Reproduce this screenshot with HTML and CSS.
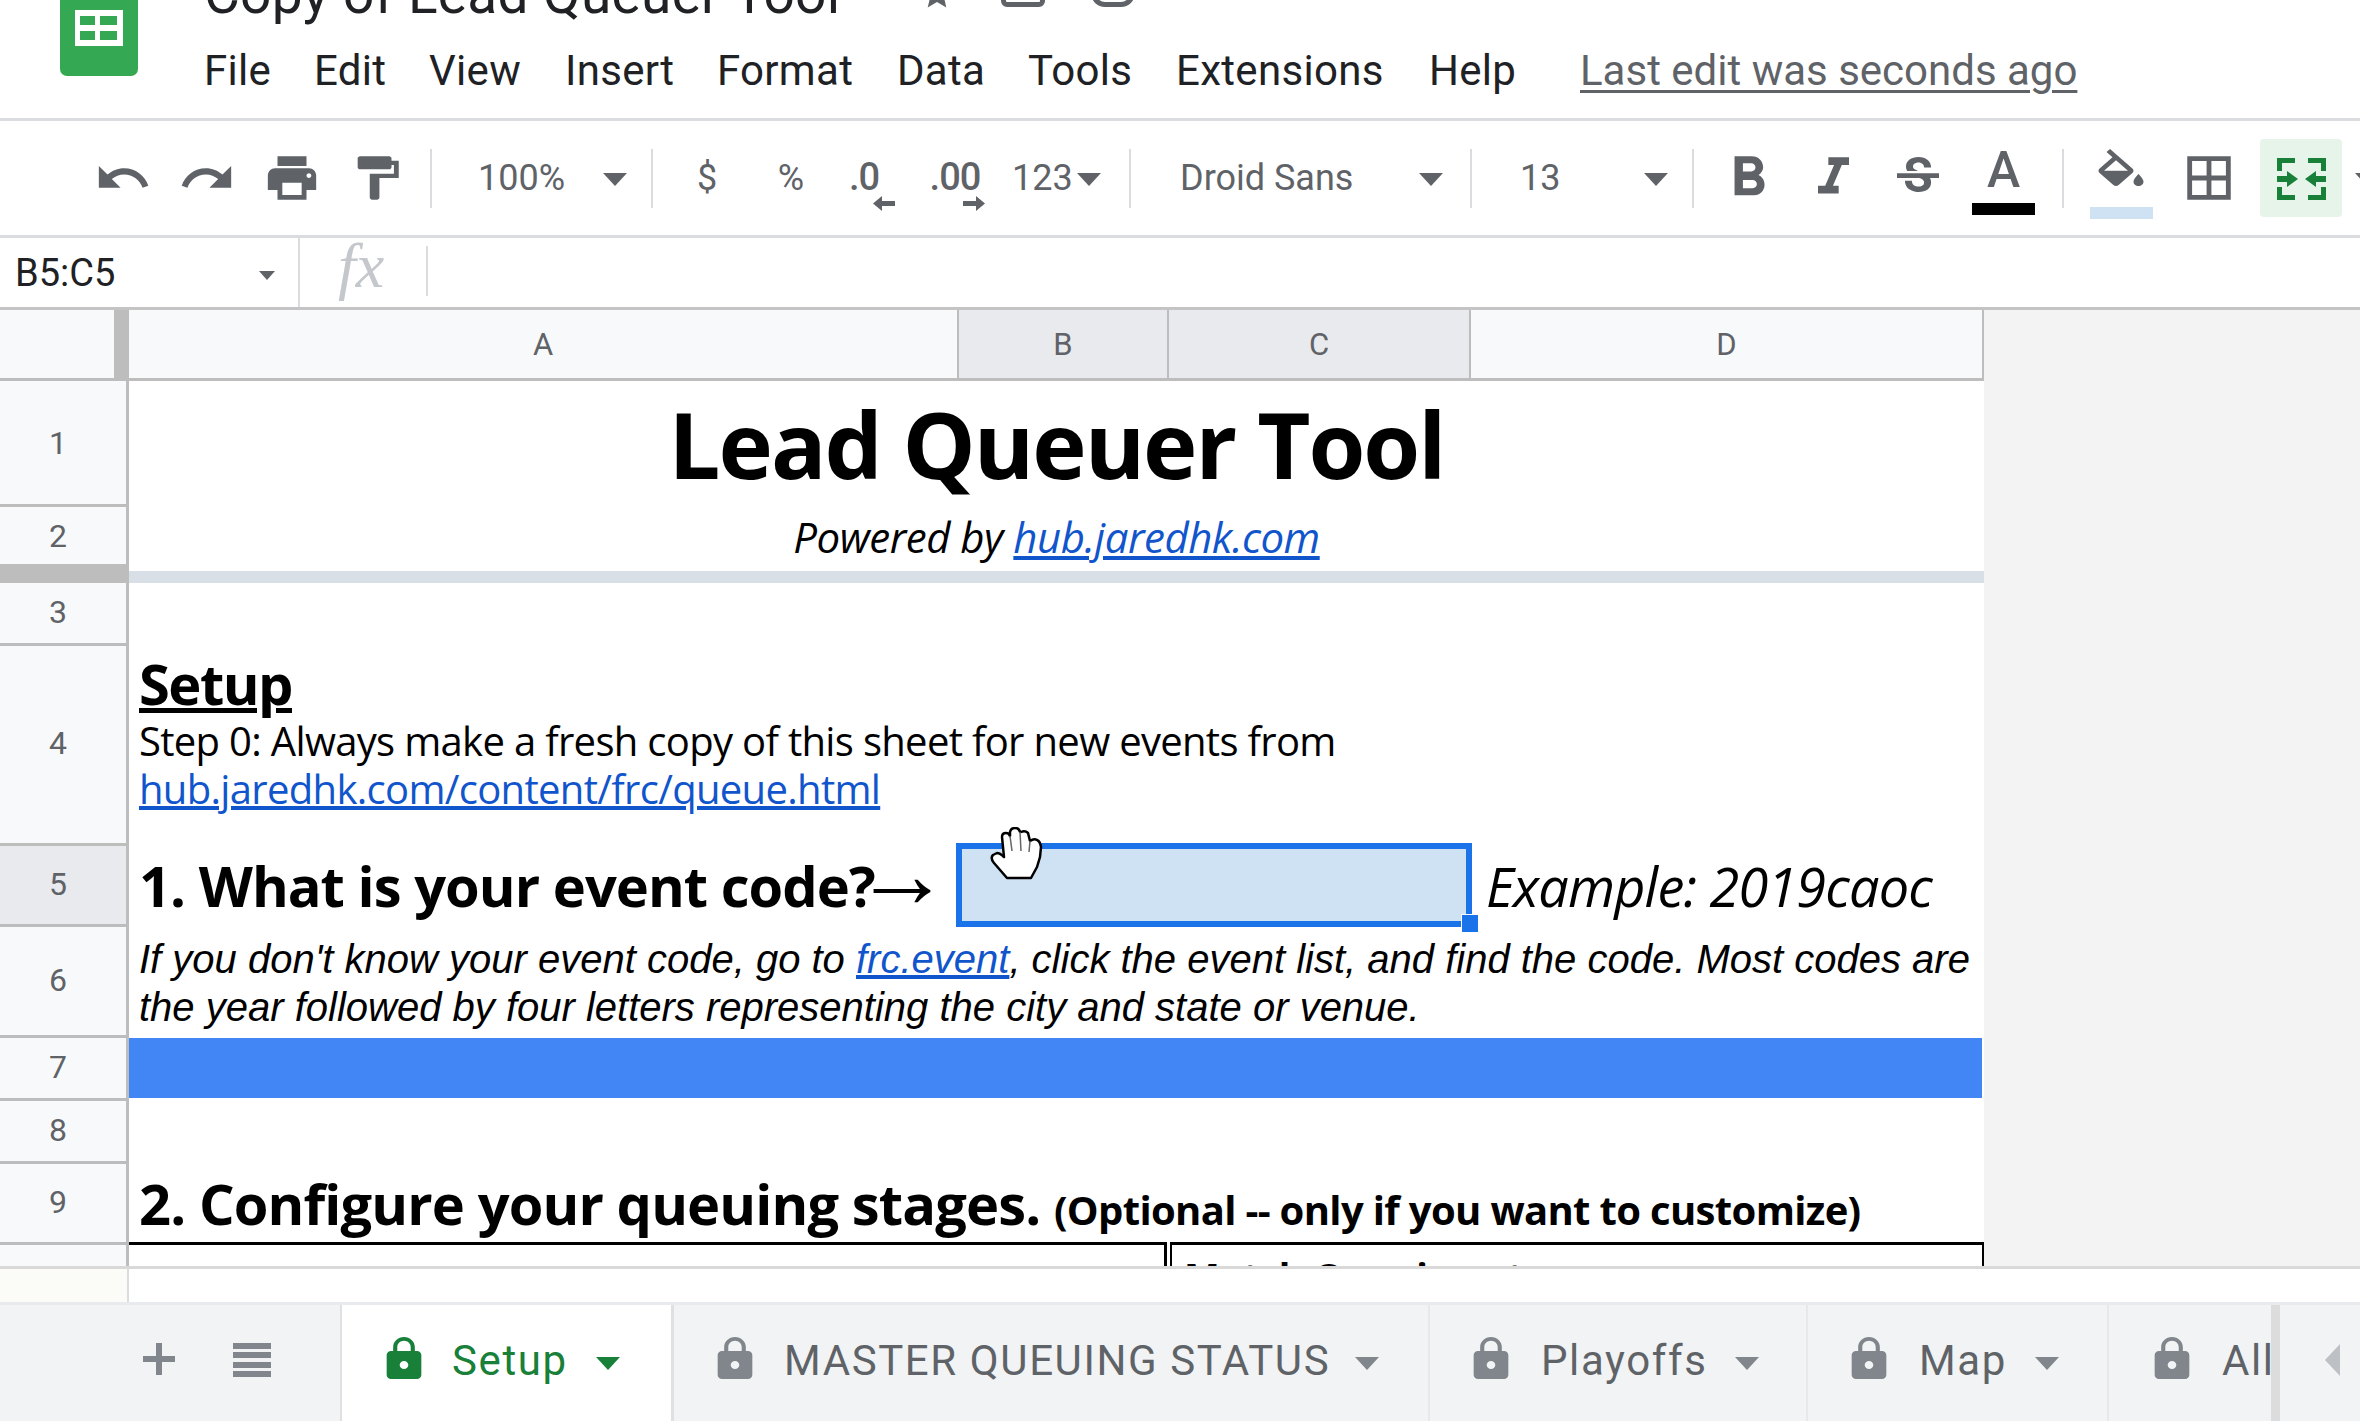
FILE: index.html
```html
<!DOCTYPE html>
<html lang="en">
<head>
<meta charset="utf-8">
<title>Copy of Lead Queuer Tool</title>
<link rel="stylesheet" href="styles.css">
</head>
<body>
<header class="appbar">
  <div class="logo">
    <svg width="48" height="36" viewBox="0 0 48 36"><path fill="#fff" d="M0 0h48v36H0z"/><path fill="#34a853" d="M5 6h15v9H5zM25 6h17v9H25zM5 21h15v9H5zM25 21h17v9H25z"/></svg>
  </div>
  <div class="appmain">
    <div class="titlerow">
      <span class="doctitle">Copy of Lead Queuer Tool</span>
      <svg class="star" width="36" height="36" viewBox="0 0 24 24"><path fill="#5f6368" d="M12 17.3l6.2 3.7-1.6-7L22 9.2l-7.2-.6L12 2 9.2 8.6 2 9.2 7.5 14l-1.7 7z"/></svg>
      <span class="ghost one"></span>
      <span class="ghost two"></span>
    </div>
    <nav class="menubar">
      <span class="m-file">File</span><span class="m-edit">Edit</span><span class="m-view">View</span><span class="m-insert">Insert</span><span class="m-format">Format</span><span class="m-data">Data</span><span class="m-tools">Tools</span><span class="m-ext">Extensions</span><span class="m-help">Help</span>
      <a class="lastedit">Last edit was seconds ago</a>
    </nav>
  </div>
</header>

<div class="toolbar">
  <div class="cell"><svg class="ic" width="58" height="58" viewBox="0 0 24 24"><path d="M12.5 8c-2.65 0-5.05.99-6.9 2.6L2 7v9h9l-3.62-3.62c1.39-1.16 3.16-1.88 5.12-1.88 3.54 0 6.55 2.31 7.6 5.5l2.37-.78C21.08 11.03 17.15 8 12.5 8z"/></svg></div>
  <div class="cell"><svg class="ic" width="58" height="58" viewBox="0 0 24 24"><path d="M18.4 10.6C16.55 8.99 14.15 8 11.5 8c-4.65 0-8.58 3.03-9.96 7.22L3.9 16c1.05-3.19 4.05-5.5 7.6-5.5 1.95 0 3.73.72 5.12 1.88L13 16h9V7l-3.6 3.6z"/></svg></div>
  <div class="cell"><svg class="ic" width="58" height="58" viewBox="0 0 24 24"><path d="M19 8H5c-1.66 0-3 1.34-3 3v6h4v4h12v-4h4v-6c0-1.66-1.34-3-3-3zm-3 11H8v-5h8v5zm3-7c-.55 0-1-.45-1-1s.45-1 1-1 1 .45 1 1-.45 1-1 1zm-1-9H6v4h12V3z"/></svg></div>
  <div class="cell"><svg class="ic" width="58" height="52" viewBox="0 0 24 24" preserveAspectRatio="none"><path d="M18 4V3c0-.55-.45-1-1-1H5c-.55 0-1 .45-1 1v4c0 .55.45 1 1 1h12c.55 0 1-.45 1-1V6h1v4H9v11c0 .55.45 1 1 1h2c.55 0 1-.45 1-1v-9h8V4h-3z"/></svg></div>
  <div class="cell"><i class="sep"></i></div>
  <div class="cell drop zoomc"><span>100%</span><b class="tri"></b></div>
  <div class="cell"><i class="sep"></i></div>
  <div class="cell txt">$</div>
  <div class="cell txt">%</div>
  <div class="cell dec dec1"><span>.0</span><svg class="ic darrow left" width="22" height="15" viewBox="0 0 22 15"><path d="M0 7.500L9 0v5h13v5H9v5z"/></svg></div>
  <div class="cell dec dec2"><span>.00</span><svg class="ic darrow right" width="22" height="15" viewBox="0 0 22 15"><path d="M22 7.500L13 0v5H0v5h13v5z"/></svg></div>
  <div class="cell drop numc"><span>123</span><b class="tri"></b></div>
  <div class="cell"><i class="sep"></i></div>
  <div class="cell drop fontc"><span>Droid Sans</span><b class="tri"></b></div>
  <div class="cell"><i class="sep"></i></div>
  <div class="cell drop sizec"><span>13</span><b class="tri"></b></div>
  <div class="cell"><i class="sep"></i></div>
  <div class="cell"><svg class="ic" width="67" height="67" viewBox="0 0 24 24"><path d="M15.6 10.790c.97-.67 1.65-1.770 1.650-2.790 0-2.260-1.750-4-4-4H7v14h7.040c2.090 0 3.710-1.700 3.710-3.790 0-1.520-.86-2.820-2.150-3.420zM10 6.500h3c.83 0 1.500.67 1.500 1.500s-.67 1.500-1.500 1.500h-3v-3zm3.500 9H10v-3h3.500c.83 0 1.500.67 1.500 1.500s-.67 1.500-1.500 1.500z"/></svg></div>
  <div class="cell"><svg class="ic" width="67" height="62" viewBox="0 0 24 24"><path d="M10 4v3h2.210l-3.420 8H6v3h8v-3h-2.210l3.420-8H18V4z"/></svg></div>
  <div class="cell"><svg class="ic" width="56" height="56" viewBox="0 0 24 24"><path d="M7.240 8.750c-.26-.48-.39-1.030-.39-1.670 0-.61.13-1.160.4-1.670.26-.5.63-.93 1.110-1.290.48-.35 1.050-.63 1.700-.83.66-.19 1.390-.29 2.180-.29.81 0 1.540.11 2.210.34.66.22 1.230.54 1.690.94.47.4.83.88 1.080 1.430.25.55.38 1.150.38 1.810h-3.010c0-.31-.05-.59-.15-.85-.09-.27-.24-.49-.44-.68-.2-.19-.45-.33-.75-.44-.3-.1-.66-.16-1.060-.16-.39 0-.74.04-1.030.13-.29.09-.53.21-.72.36-.19.16-.34.34-.44.55-.1.21-.15.43-.15.66 0 .48.25.88.74 1.210.38.25.77.48 1.410.7H7.390c-.05-.08-.11-.17-.15-.25zM21 12v-2H3v2h9.620c.18.07.4.14.55.2.37.17.66.34.87.51.21.17.35.36.43.57.07.2.11.43.11.69 0 .23-.05.45-.14.66-.09.2-.23.38-.42.53-.19.15-.42.26-.71.35-.29.08-.63.13-1.010.13-.43 0-.83-.04-1.180-.13s-.66-.23-.91-.42c-.25-.19-.45-.44-.59-.75-.14-.31-.25-.76-.25-1.210H6.400c0 .55.08 1.130.24 1.580.16.45.37.85.65 1.210.28.35.6.66.98.92.37.26.78.48 1.220.65.44.17.9.3 1.380.39.48.08.96.13 1.440.13.8 0 1.530-.09 2.180-.28s1.210-.45 1.670-.79c.46-.34.82-.77 1.070-1.270s.38-1.070.38-1.710c0-.6-.1-1.140-.31-1.610-.05-.11-.11-.23-.17-.33H21z"/></svg></div>
  <div class="cell colorc"><span class="letter">A</span><i class="swatch black"></i></div>
  <div class="cell"><i class="sep"></i></div>
  <div class="cell colorc"><svg class="ic fillic" width="60" height="37" viewBox="0 0 24 17" preserveAspectRatio="none"><path d="M16.560 8.940L7.620 0 6.210 1.410l2.380 2.380-5.150 5.150c-.59.59-.59 1.540 0 2.120l5.500 5.500c.29.29.68.44 1.060.44s.77-.15 1.060-.44l5.500-5.500c.59-.58.59-1.530 0-2.120zM5.210 10L10 5.210 14.790 10H5.210zM19 11.500s-2 2.170-2 3.500c0 1.100.9 2 2 2s2-.9 2-2c0-1.330-2-3.500-2-3.500z"/></svg><i class="swatch pale"></i></div>
  <div class="cell"><svg class="ic" width="58" height="58" viewBox="0 0 24 24"><path d="M3 3v18h18V3H3zm8 16H5v-6h6v6zm0-8H5V5h6v6zm8 8h-6v-6h6v6zm0-8h-6V5h6v6z"/></svg></div>
  <div class="cell"><div class="mergebtn"><svg width="49" height="42" viewBox="0 0 49 42"><g fill="none" stroke="#188038" stroke-width="5"><path d="M2.500 13V2.500H18M31 2.500h15.500V13M2.500 29v10.500H18M31 39.500h15.500V29"/></g><path fill="#188038" d="M0 18h10v-5l11 8-11 8v-5H0zM49 18H39v-5l-11 8 11 8v-5h10z"/></svg></div></div>
  <div class="cell morec"><b class="tri"></b></div>
</div>

<div class="formulabar">
  <div class="namebox"><span>B5:C5</span><b class="tri small"></b></div>
  <div class="fx">fx</div>
</div>

<main class="sheet">
  <div class="corner"></div>
  <div class="colhead a">A</div>
  <div class="colhead b sel">B</div>
  <div class="colhead c sel">C</div>
  <div class="colhead d">D</div>
  <div class="filler"></div>

  <div class="rowhead top">1</div>
  <div class="merged title">Lead Queuer Tool</div>
  <div class="filler"></div>

  <div class="rowhead top">2</div>
  <div class="merged powered">Powered by <a>hub.jaredhk.com</a></div>
  <div class="filler"></div>

  <div class="rowhead freeze"></div>
  <div class="merged freezebar"></div>
  <div class="filler"></div>

  <div class="rowhead">3</div>
  <div class="merged"></div>
  <div class="filler"></div>

  <div class="rowhead">4</div>
  <div class="merged setup">
    <h1>Setup</h1>
    <p>Step 0: Always make a fresh copy of this sheet for new events from<br><a>hub.jaredhk.com/content/frc/queue.html</a></p>
  </div>
  <div class="filler"></div>

  <div class="rowhead sel">5</div>
  <div class="cellbox question">1. What is your event code?<span class="arrow">→</span></div>
  <div class="cellbox selection-host">
    <div class="selection"><i class="handle"></i></div>
    <svg class="hand" width="53" height="53" viewBox="0 0 53 53"><path fill="#fff" stroke="#000" stroke-width="2.500" stroke-linejoin="round" d="M17 51L4 36Q0 31 3 28L7 26Q10 26 14 30L12 10Q12 6 16 6Q19 6 20 9L20 5Q21 1 25 1Q29 1 30 5L31 5Q35 3 38 6L40 14Q44 11 47 13Q50 14 51 20L50 30L47 40L41 51Z"/><path fill="none" stroke="#666" stroke-width="1.500" d="M20 9L22 24M30 5L31 24M40 14L39 25"/></svg>
  </div>
  <div class="cellbox example">Example: 2019caoc</div>
  <div class="filler"></div>

  <div class="rowhead">6</div>
  <div class="merged note">If you don't know your event code, go to <a>frc.event</a>, click the event list, and find the code. Most codes are<br>the year followed by four letters representing the city and state or venue.</div>
  <div class="filler"></div>

  <div class="rowhead">7</div>
  <div class="merged"><div class="bluebar"></div></div>
  <div class="filler"></div>

  <div class="rowhead">8</div>
  <div class="merged"></div>
  <div class="filler"></div>

  <div class="rowhead">9</div>
  <div class="merged configure">2. Configure your queuing stages. <small>(Optional -- only if you want to customize)</small></div>
  <div class="filler"></div>

  <div class="rowhead last"></div>
  <div class="stagebox left"></div>
  <div class="stagebox right">Match Queuing at</div>
  <div class="filler"></div>
</main>

<div class="strip"><div class="stripgutter"></div></div>

<footer class="tabbar">
  <div class="tabtools">
    <svg width="32" height="32" viewBox="0 0 32 32"><path fill="#80868b" d="M13 0h6v13h13v6H19v13h-6V19H0v-6h13z"/></svg>
    <svg width="38" height="34" viewBox="0 0 38 34"><path fill="#80868b" d="M0 0h38v6H0zM0 9h38v6H0zM0 19h38v6H0zM0 28h38v6H0z"/></svg>
  </div>
  <div class="tab active setup-tab">
    <svg class="lock" width="52" height="48" viewBox="0 0 24 24" preserveAspectRatio="none"><path d="M18 8h-1V6c0-2.760-2.240-5-5-5S7 3.240 7 6v2H6c-1.100 0-2 .9-2 2v10c0 1.100.9 2 2 2h12c1.100 0 2-.9 2-2V10c0-1.100-.9-2-2-2zm-6 9c-1.100 0-2-.9-2-2s.9-2 2-2 2 .9 2 2-.9 2-2 2zm3.100-9H8.900V6c0-1.710 1.390-3.100 3.100-3.100 1.710 0 3.100 1.390 3.100 3.100v2z"/></svg>
    <span>Setup</span><b class="tabtri"></b>
  </div>
  <div class="tab master-tab">
    <svg class="lock" width="52" height="48" viewBox="0 0 24 24" preserveAspectRatio="none"><path d="M18 8h-1V6c0-2.760-2.240-5-5-5S7 3.240 7 6v2H6c-1.100 0-2 .9-2 2v10c0 1.100.9 2 2 2h12c1.100 0 2-.9 2-2V10c0-1.100-.9-2-2-2zm-6 9c-1.100 0-2-.9-2-2s.9-2 2-2 2 .9 2 2-.9 2-2 2zm3.100-9H8.900V6c0-1.710 1.390-3.100 3.100-3.100 1.710 0 3.100 1.390 3.100 3.100v2z"/></svg>
    <span>MASTER QUEUING STATUS</span><b class="tabtri"></b>
  </div>
  <div class="tab playoffs-tab">
    <svg class="lock" width="52" height="48" viewBox="0 0 24 24" preserveAspectRatio="none"><path d="M18 8h-1V6c0-2.760-2.240-5-5-5S7 3.240 7 6v2H6c-1.100 0-2 .9-2 2v10c0 1.100.9 2 2 2h12c1.100 0 2-.9 2-2V10c0-1.100-.9-2-2-2zm-6 9c-1.100 0-2-.9-2-2s.9-2 2-2 2 .9 2 2-.9 2-2 2zm3.100-9H8.900V6c0-1.710 1.390-3.100 3.100-3.100 1.710 0 3.100 1.390 3.100 3.100v2z"/></svg>
    <span>Playoffs</span><b class="tabtri"></b>
  </div>
  <div class="tab map-tab">
    <svg class="lock" width="52" height="48" viewBox="0 0 24 24" preserveAspectRatio="none"><path d="M18 8h-1V6c0-2.760-2.240-5-5-5S7 3.240 7 6v2H6c-1.100 0-2 .9-2 2v10c0 1.100.9 2 2 2h12c1.100 0 2-.9 2-2V10c0-1.100-.9-2-2-2zm-6 9c-1.100 0-2-.9-2-2s.9-2 2-2 2 .9 2 2-.9 2-2 2zm3.100-9H8.900V6c0-1.710 1.390-3.100 3.100-3.100 1.710 0 3.100 1.390 3.100 3.100v2z"/></svg>
    <span>Map</span><b class="tabtri"></b>
  </div>
  <div class="tab all-tab">
    <svg class="lock" width="52" height="48" viewBox="0 0 24 24" preserveAspectRatio="none"><path d="M18 8h-1V6c0-2.760-2.240-5-5-5S7 3.240 7 6v2H6c-1.100 0-2 .9-2 2v10c0 1.100.9 2 2 2h12c1.100 0 2-.9 2-2V10c0-1.100-.9-2-2-2zm-6 9c-1.100 0-2-.9-2-2s.9-2 2-2 2 .9 2 2-.9 2-2 2zm3.100-9H8.900V6c0-1.710 1.390-3.100 3.100-3.100 1.710 0 3.100 1.390 3.100 3.100v2z"/></svg>
    <span>All</span>
  </div>
  <div class="scrollarrow"><i></i></div>
</footer>
</body>
</html>
```

FILE: styles.css
```css
* { box-sizing: border-box; }
html, body { margin: 0; padding: 0; width: 2360px; height: 1421px; overflow: hidden; background: #fff; }
body { font-family: Roboto, "Liberation Sans", sans-serif; color: #202124; }
a { color: #1155cc; text-decoration: underline; }

/* App bar */
.appbar { height: 121px; border-bottom: 3px solid #dadce0; display: flex; overflow: hidden; }
.logo { width: 78px; height: 76px; margin-left: 60px; background: #34a853; border-radius: 0 0 7px 7px; padding: 10px 0 0 15px; }
.logo svg { display: block; }
.appmain { margin-left: 66px; flex: 1; }
.titlerow { height: 40px; margin-top: -40px; display: flex; align-items: flex-start; position: relative; }
.doctitle { font-size: 55px; letter-spacing: .3px; line-height: 60px; color: #202124; width: 718px; flex: none; margin-top: 4px; }
.star { margin-top: 16px; margin-left: -3px; }
.ghost { display: block; width: 44px; height: 46px; border: 5px solid #5f6368; border-radius: 6px; margin-left: 46px; flex: none; margin-top: 1px; }
.ghost.two { border-radius: 14px; }
.menubar { display: flex; align-items: baseline; font-size: 42px; letter-spacing: .3px; line-height: 50px; margin-top: 46px; white-space: nowrap; }
.menubar span { display: block; }
.m-file { width: 110px; } .m-edit { width: 115px; } .m-view { width: 136px; } .m-insert { width: 152px; }
.m-format { width: 180px; } .m-data { width: 131px; } .m-tools { width: 148px; } .m-ext { width: 253px; } .m-help { width: 151px; }
.lastedit { color: #5f6368; letter-spacing: 0; text-decoration: underline; text-decoration-thickness: 3px; text-underline-offset: 5px; }

/* Toolbar */
.toolbar { height: 117px; border-bottom: 3px solid #dadce0; padding-left: 81px; display: grid; align-items: center; overflow: hidden;
  grid-template-columns: 84px 84px 85px 85px 24px 197px 24px 86px 82px 80px 92px 114px 24px 317px 24px 198px 24px 86px 84px 85px 87px 32px 84px 92px 92px 20px;
  font-size: 36px; color: #5f6368; }
.cell { height: 100%; display: flex; align-items: center; justify-content: center; position: relative; }
.ic { fill: #5f6368; display: block; }
.sep { display: block; width: 2px; height: 59px; background: #dadce0; }
.tri { display: block; width: 0; height: 0; border-left: 12px solid transparent; border-right: 12px solid transparent; border-top: 13px solid #5f6368; flex: none; margin-top: 3px; }
.tri.small { border-left-width: 8px; border-right-width: 8px; border-top-width: 9px; }
.drop { justify-content: space-between; }
.zoomc { padding: 0 13px 0 35px; }
.numc { padding: 0 17px 0 8px; }
.fontc { padding: 0 16px 0 38px; }
.sizec { padding: 0 13px 0 37px; }
.txt { font-size: 36px; }
.dec { font-size: 38px; font-weight: 500; letter-spacing: -1px; }
.dec span { margin-top: -3px; }
.dec1 span { margin-right: 16px; }
.dec2 span { margin-right: 6px; }
.darrow { position: absolute; top: 75px; }
.darrow.left { left: 41px; }
.darrow.right { left: 51px; }
.colorc { flex-direction: column; justify-content: flex-start; }
.letter { font-size: 50px; font-weight: 500; line-height: 48px; margin-top: 25px; height: 57px; }
.fillic { margin-top: 28px; margin-bottom: 16px; flex: none; }
.swatch { display: block; width: 63px; height: 12px; flex: none; }
.swatch.black { background: #000; }
.swatch.pale { background: #cfe2f3; margin-top: 5px; }
.mergebtn { width: 82px; height: 78px; background: #e6f4ea; border-radius: 4px; display: flex; align-items: center; justify-content: center; }
.mergebtn svg { display: block; margin-top: 1px; }
.morec { justify-content: flex-start; padding-left: 8px; }

/* Formula bar */
.formulabar { height: 72px; border-bottom: 3px solid #c4c4c4; display: flex; align-items: stretch; }
.namebox { width: 300px; padding: 0 23px 0 15px; display: flex; align-items: center; justify-content: space-between; font-size: 38px; color: #202124; border-right: 2px solid #dadce0; }
.namebox .tri { margin-top: 6px; }
.fx { width: 128px; height: 50px; margin-top: 8px; border-right: 2px solid #dadce0; padding-left: 38px; font-family: "Liberation Serif", serif; font-style: italic; font-size: 64px; line-height: 40px; color: #c4c7cb; }

/* Sheet */
.sheet { height: 956px; overflow: hidden; background: #fff; display: grid;
  grid-template-columns: 129px 830px 210px 302px 513px 1fr;
  grid-template-rows: 71px 126px 60px 16px 63px 200px 81px 111px 63px 63px 81px 60px; }
.corner { background: #f8f9fa; border-right: 15px solid #bdbdbd; border-bottom: 3px solid #bdbdbd; }
.colhead { background: #f8f9fa; border-right: 2px solid #bdbdbd; border-bottom: 3px solid #bdbdbd; display: flex; align-items: center; justify-content: center; font-size: 31px; color: #5f6368; }
.colhead.sel { background: #e8eaed; }
.filler { background: #f3f3f3; }
.rowhead { background: #f8f9fa; border-right: 3px solid #bdbdbd; border-bottom: 3px solid #bdbdbd; display: flex; align-items: center; justify-content: center; padding: 0 10px 3px 0; font-size: 32px; color: #5f6368; }
.rowhead.top { padding-bottom: 0; }
.rowhead.sel { background: #e8eaed; }
.rowhead.freeze { background: #bdbdbd; border: 0; }
.rowhead.last { border-bottom: 0; }
.merged { grid-column: 2 / 6; font-family: "Open Sans", sans-serif; color: #000; min-width: 0; }
.cellbox { font-family: "Open Sans", sans-serif; color: #000; min-width: 0; white-space: nowrap; }

.title { font-weight: 700; font-size: 92px; letter-spacing: -2px; line-height: 126px; text-align: center; }
.powered { font-style: italic; font-size: 42px; letter-spacing: -.5px; line-height: 60px; text-align: center; }
.freezebar { background: #d9dfe7; border-top: 4px solid #fff; }
.setup { padding-left: 10px; display: flex; flex-direction: column; justify-content: flex-end; }
.setup h1 { margin: 0 0 4px; font-size: 56px; letter-spacing: -1.5px; line-height: 60px; font-weight: 700; text-decoration: underline; }
.setup p { margin: 0; font-size: 40px; letter-spacing: -.68px; line-height: 48px; padding-bottom: 33px; }
.question { grid-column: 2; padding-left: 10px; font-weight: 700; font-size: 56px; letter-spacing: -.95px; line-height: 78px; }
.arrow { font-weight: 400; font-family: "Liberation Serif", serif; font-size: 96px; line-height: 1px; margin-left: -21px; letter-spacing: 0; }
.selection-host { grid-column: 3 / 5; position: relative; overflow: visible; z-index: 2; }
.selection { position: absolute; left: -3px; top: -3px; width: 516px; height: 84px; background: #cfe2f3; border: 6px solid #1a73e8; }
.handle { position: absolute; right: -13px; bottom: -12px; width: 18px; height: 19px; background: #1a73e8; border: 1px solid #fff; display: block; }
.hand { position: absolute; left: 31px; top: -19px; }
.example { grid-column: 5; padding-left: 15px; font-style: italic; font-size: 54px; letter-spacing: -.8px; line-height: 80px; }
.note { padding-left: 10px; font-family: "Liberation Sans", sans-serif; font-style: italic; font-size: 40px; line-height: 48px; padding-top: 8px; white-space: nowrap; }
.bluebar { height: 60px; margin-right: 2px; background: #4285f4; }
.configure { padding-left: 10px; font-weight: 700; font-size: 56px; letter-spacing: -.87px; line-height: 78px; white-space: nowrap; }
.configure small { font-size: 40px; letter-spacing: -.66px; }
.stagebox { margin-top: -3px; border-top: 3px solid #000; min-width: 0; overflow: hidden; }
.stagebox.left { grid-column: 2 / 4; width: 1038px; border-right: 3px solid #000; }
.stagebox.right { grid-column: 4 / 6; margin-left: 1px; border-left: 2px solid #000; border-right: 2px solid #000; font-family: "Open Sans", sans-serif; font-weight: 700; font-size: 38px; line-height: 44px; padding: 9px 0 0 12px; color: #000; }

/* Bottom */
.strip { height: 36px; border-top: 3px solid #d9d9d9; background: #fff; }
.stripgutter { width: 129px; height: 100%; background: #fbfbf8; border-right: 2px solid #dadce0; }
.tabbar { height: 119px; border-top: 3px solid #e8eaed; background: #f1f3f4; display: flex; overflow: hidden; }
.tabtools { width: 340px; padding: 38px 0 0 143px; display: flex; align-items: flex-start; gap: 58px; flex: none; }
.tab { display: flex; align-items: flex-start; flex: none; height: 116px; border-right: 2px solid #e8e8e8; font-family: Roboto, sans-serif; font-size: 42px; color: #5f6368; }
.tab span { line-height: 50px; margin-top: 31px; letter-spacing: 1.6px; }
.lock { fill: #80868b; margin-top: 30px; flex: none; }
.tabtri { display: block; width: 0; height: 0; border-left: 12px solid transparent; border-right: 12px solid transparent; border-top: 13px solid #80868b; margin-top: 52px; flex: none; }
.tab.active { background: #fff; color: #188038; border-left: 2px solid #e0e0e0; border-right: 3px solid #e0e0e0; }
.tab.active .lock { fill: #188038; }
.tab.active .tabtri { border-top-color: #188038; }
.setup-tab { width: 334px; padding-left: 36px; }
.setup-tab .lock { margin-right: 22px; }
.setup-tab .tabtri { margin-left: 28px; }
.master-tab { width: 756px; padding-left: 35px; }
.master-tab .lock { margin-right: 23px; }
.master-tab .tabtri { margin-left: 25px; }
.playoffs-tab { width: 378px; padding-left: 35px; }
.playoffs-tab .lock { margin-right: 24px; }
.playoffs-tab .tabtri { margin-left: 28px; }
.map-tab { width: 301px; padding-left: 35px; }
.map-tab .lock { margin-right: 24px; }
.map-tab .tabtri { margin-left: 28px; }
.all-tab { width: 171px; padding-left: 37px; overflow: hidden; border-right: 9px solid #dcdcdc; }
.all-tab .lock { margin-right: 24px; }
.scrollarrow { flex: 1; padding: 39px 0 0 45px; background: #f1f3f4; }
.scrollarrow i { display: block; width: 0; height: 0; border-top: 16px solid transparent; border-bottom: 16px solid transparent; border-right: 15px solid #bdc1c6; }
```
